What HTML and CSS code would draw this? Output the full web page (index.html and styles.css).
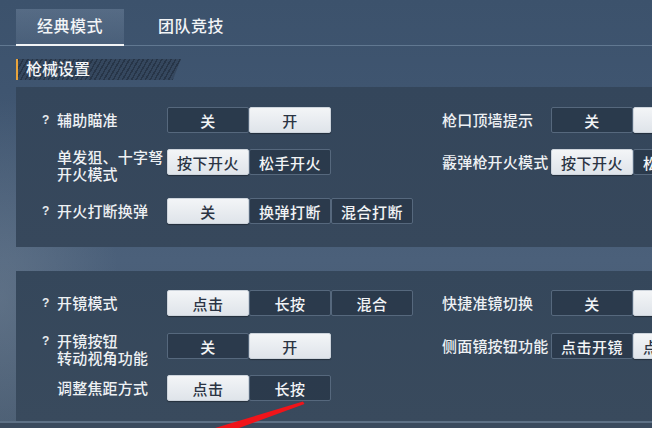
FILE: index.html
```html
<!DOCTYPE html>
<html lang="zh">
<head>
<meta charset="utf-8">
<title>设置</title>
<link rel="stylesheet" href="styles.css">
</head>
<body>
<div class="screen">
  <nav class="tabs">
    <div class="tab active">经典模式</div>
    <div class="tab">团队竞技</div>
  </nav>

  <div class="section-title"><span>枪械设置</span></div>

  <section class="panel p1">
    <div class="line">
      <div class="cell left">
        <span class="q">?</span>
        <span class="label">辅助瞄准</span>
        <div class="seg"><span class="btn">关</span><span class="btn on">开</span></div>
      </div>
      <div class="cell right">
        <span class="label">枪口顶墙提示</span>
        <div class="seg"><span class="btn">关</span><span class="btn on">开</span></div>
      </div>
    </div>
    <div class="line">
      <div class="cell left">
        <span class="q"></span>
        <span class="label two"><span class="ln">单发狙、十字弩</span><span class="ln">开火模式</span></span>
        <div class="seg"><span class="btn on">按下开火</span><span class="btn">松手开火</span></div>
      </div>
      <div class="cell right">
        <span class="label">霰弹枪开火模式</span>
        <div class="seg"><span class="btn on">按下开火</span><span class="btn">松手开火</span></div>
      </div>
    </div>
    <div class="line l3">
      <div class="cell left">
        <span class="q">?</span>
        <span class="label">开火打断换弹</span>
        <div class="seg"><span class="btn on">关</span><span class="btn">换弹打断</span><span class="btn">混合打断</span></div>
      </div>
    </div>
  </section>

  <section class="panel p2">
    <div class="line">
      <div class="cell left">
        <span class="q">?</span>
        <span class="label">开镜模式</span>
        <div class="seg"><span class="btn on">点击</span><span class="btn">长按</span><span class="btn">混合</span></div>
      </div>
      <div class="cell right">
        <span class="label">快捷准镜切换</span>
        <div class="seg"><span class="btn">关</span><span class="btn on">开</span></div>
      </div>
    </div>
    <div class="line">
      <div class="cell left">
        <span class="q top">?</span>
        <span class="label two"><span class="ln">开镜按钮</span><span class="ln">转动视角功能</span></span>
        <div class="seg"><span class="btn">关</span><span class="btn on">开</span></div>
      </div>
      <div class="cell right">
        <span class="label">侧面镜按钮功能</span>
        <div class="seg"><span class="btn">点击开镜</span><span class="btn on">点击开镜</span></div>
      </div>
    </div>
    <div class="line">
      <div class="cell left">
        <span class="q"></span>
        <span class="label">调整焦距方式</span>
        <div class="seg"><span class="btn on">点击</span><span class="btn">长按</span></div>
      </div>
    </div>
  </section>

  <div class="footer"></div>

  <svg class="arrow" width="652" height="428" viewBox="0 0 652 428" aria-hidden="true">
    <polygon points="303,401.5 304.5,404 239,428 215,428" fill="#f0141a"/>
  </svg>
</div>
</body>
</html>
```

FILE: styles.css
```css
* { box-sizing: border-box; }

html, body {
  margin: 0;
  padding: 0;
}

body {
  width: 652px;
  height: 428px;
  overflow: hidden;
  font-family: "Liberation Sans", "Noto Sans CJK SC", sans-serif;
  color: #eef1f4;
}

.screen {
  position: relative;
  width: 652px;
  height: 428px;
  overflow: hidden;
  background:
    radial-gradient(ellipse 120px 200px at 0px 300px, rgba(130,145,160,0.35), transparent),
    linear-gradient(180deg, #3c526c 0px, #3f5570 90px, #4b607a 260px, #46596f 428px);
}

/* Tabs */
.tabs {
  display: flex;
  height: 46px;
  padding-left: 16px;
  border-bottom: 1px solid #617891;
}

.tab {
  font-size: 16px;
  line-height: 36px;
  margin-top: 9px;
  color: #f2f4f6;
  letter-spacing: 0.5px;
  font-weight: 500;
}

.tab.active {
  width: 108px;
  text-align: center;
  background: linear-gradient(180deg, rgba(140,160,185,0.32), rgba(140,160,185,0.16));
  border-bottom: 2px solid #f2f4f6;
  margin-bottom: -1px;
}

.tab:not(.active) {
  padding-left: 34px;
}

/* Section title */
.section-title {
  margin: 13px 0 7px 16px;
  width: 165px;
  height: 21px;
  border-left: 2px solid #e9a43c;
  background:
    repeating-linear-gradient(120deg, rgba(20,28,40,0.55) 0px, rgba(20,28,40,0.55) 1.5px, rgba(45,60,80,0.55) 1.5px, rgba(45,60,80,0.55) 4px);
  clip-path: polygon(0 0, 100% 0, 95% 100%, 0 100%);
}

.section-title span {
  display: block;
  padding-left: 8px;
  font-size: 16px;
  line-height: 21px;
  color: #f2f4f6;
  font-weight: 500;
}

/* Panels */
.panel {
  margin-left: 16px;
  padding-left: 26px;
  background: linear-gradient(180deg, #34465b, #37485c);
  display: flex;
  flex-direction: column;
}

.p1 {
  height: 160px;
  padding-top: 20px;
}

.p2 {
  margin-top: 24px;
  height: 150px;
  padding-top: 19px;
  background: linear-gradient(180deg, #35475b, #394a5d);
}

.line {
  display: flex;
  height: 26px;
}

.p1 .line + .line { margin-top: 16px; }
.p1 .line.l3 { margin-top: 23px; }
.p2 .line + .line { margin-top: 17px; }
.p2 .line:last-child { margin-top: 16px; }

.cell {
  display: flex;
  align-items: center;
  height: 26px;
  flex-shrink: 0;
}

.cell.left { width: 400px; }

.q {
  width: 15px;
  flex-shrink: 0;
  font-size: 12px;
  font-weight: bold;
  font-family: "Liberation Sans", sans-serif;
  color: #e6e9ed;
}

.q.top { align-self: flex-start; line-height: 17px; }

.label {
  font-size: 15px;
  line-height: 17px;
  color: #eef1f4;
  white-space: nowrap;
  letter-spacing: 0.2px;
  flex-shrink: 0;
  font-weight: 500;
}

.cell.left .label { width: 110px; }
.cell.right .label { width: 109px; }

.label.two {
  align-self: flex-start;
  display: flex;
  flex-direction: column;
}

.ln {
  display: block;
  height: 17px;
  line-height: 17px;
}

/* Segmented buttons */
.seg {
  display: flex;
  flex-shrink: 0;
}

.btn {
  width: 82px;
  height: 26px;
  display: flex;
  align-items: center;
  justify-content: center;
  font-size: 15px;
  letter-spacing: 0.5px;
  color: #f2f4f6;
  background: rgba(38,52,70,0.7);
  border: 1px solid #56687d;
  border-radius: 2px;
  flex-shrink: 0;
  font-weight: 500;
}

.btn.on {
  color: #2b3443;
  background: linear-gradient(180deg, #f3f5f7, #dfe4ea);
  border-color: #cdd4dc;
  box-shadow: 0 1px 1px rgba(0,0,0,0.35);
}

/* Footer line */
.footer {
  height: 7px;
  border-top: 2px solid #5e7186;
  background: #3a4a5d;
}

/* Annotation arrow */
.arrow {
  position: absolute;
  left: 0;
  top: 0;
  pointer-events: none;
}
```
